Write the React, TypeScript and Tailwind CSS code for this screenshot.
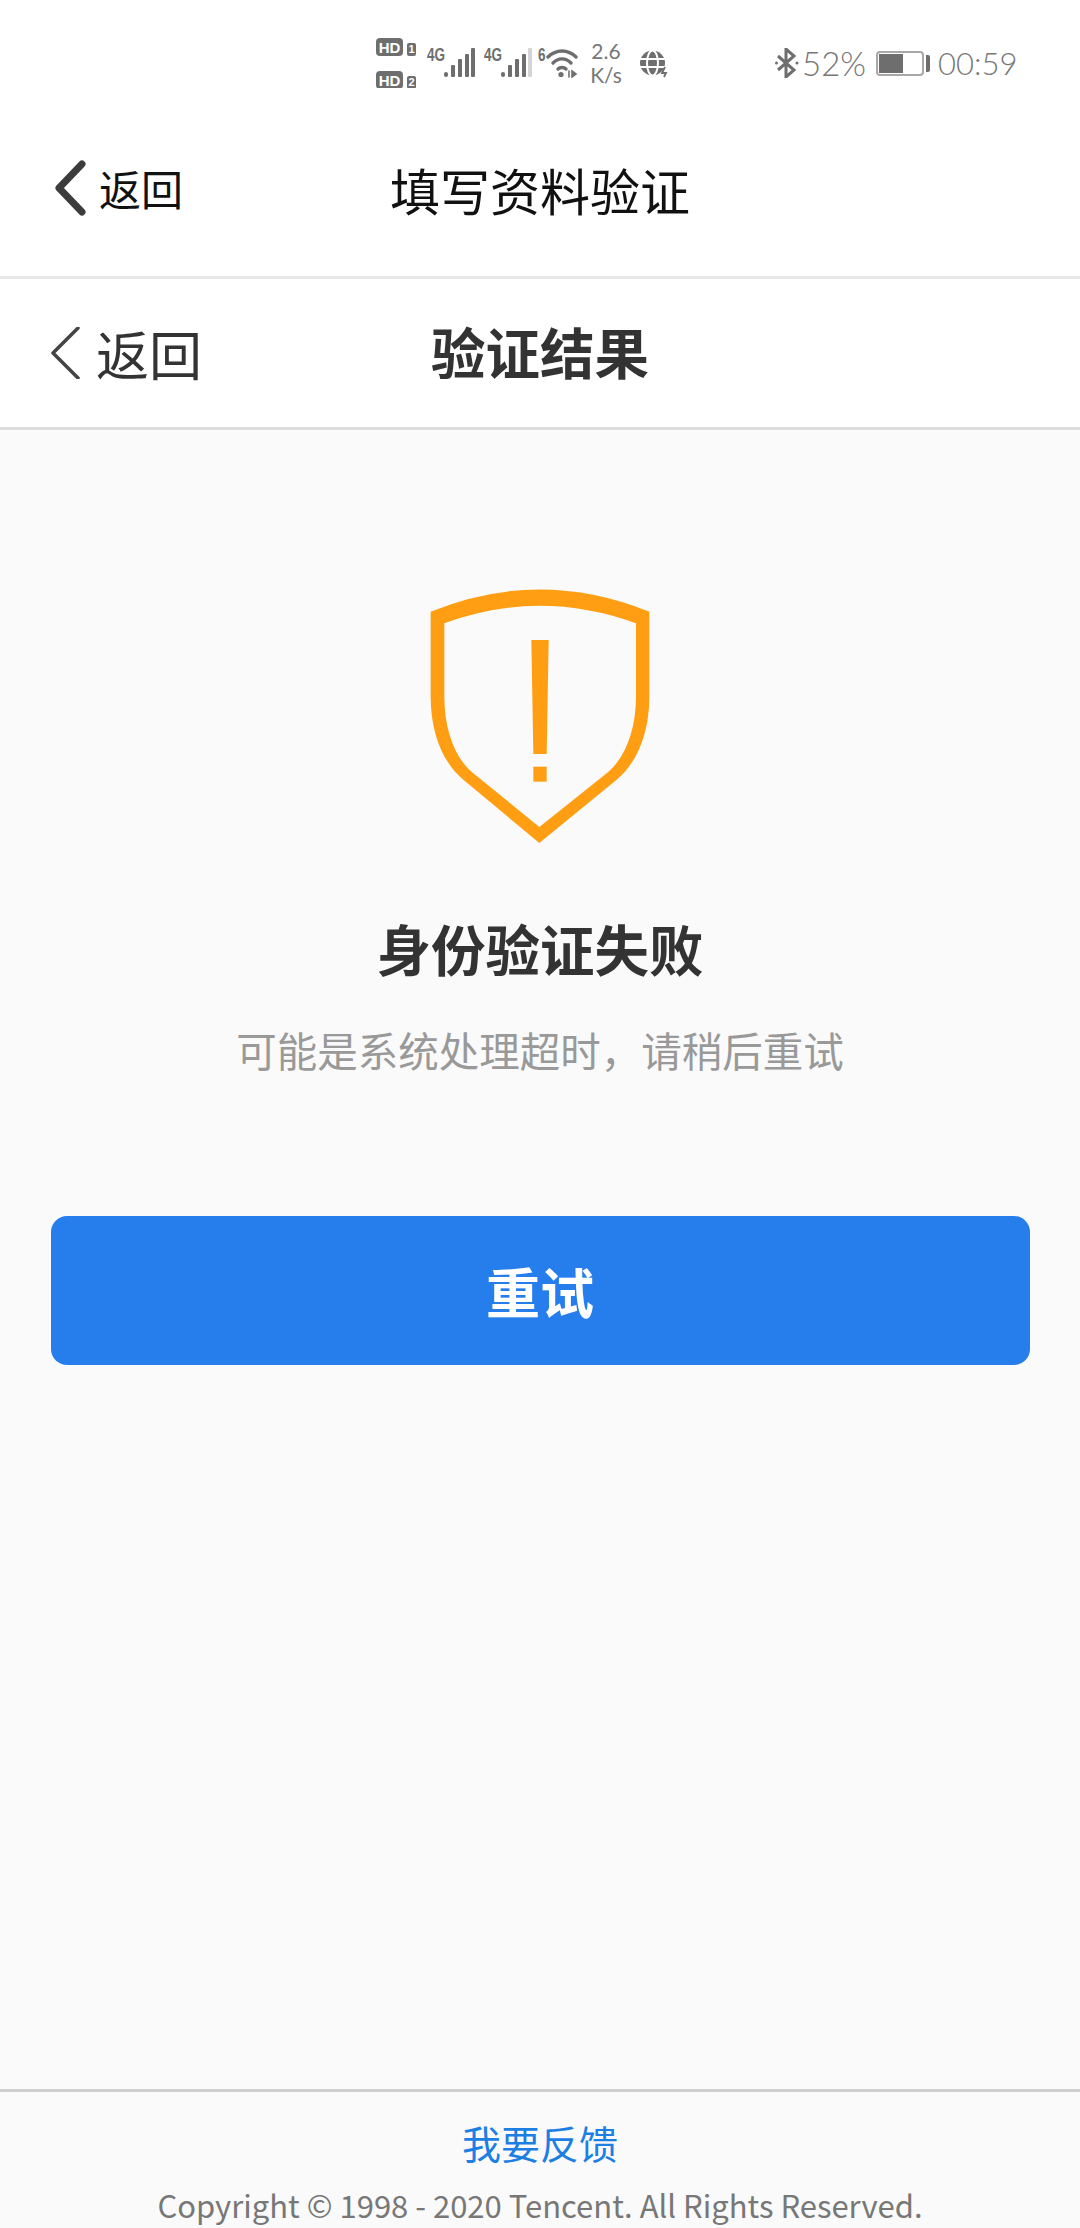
const cjk = "font-['Noto_Sans_CJK_SC','Noto_Sans',sans-serif]";

function HdRow({ n }: { n: string }) {
  return (
    <div className="flex items-end gap-[4px] h-[19px]">
      <div className="w-[27px] h-[18px] rounded-[4px] bg-[#6e6e6e] flex items-center justify-center text-white text-[15px] leading-none font-bold font-['Liberation_Sans',sans-serif]">HD</div>
      <div className="w-[9px] h-[13px] rounded-[2px] bg-[#6e6e6e] flex items-center justify-center text-white text-[11px] leading-none font-bold font-['Liberation_Sans',sans-serif]">{n}</div>
    </div>
  );
}

function Signal({ lastLight }: { lastLight?: boolean }) {
  return (
    <div className="flex items-start w-[48px] h-[30px]">
      <span className="w-[17px] text-[18px] leading-[15px] font-bold text-[#6e6e6e] font-['Liberation_Sans',sans-serif] scale-x-[0.75] origin-left">4G</span>
      <svg width="31" height="30" viewBox="0 0 31 30" className="shrink-0">
        <rect x="0" y="24" width="4" height="5" rx="2" fill="#6e6e6e" />
        <rect x="7" y="17" width="4" height="12" rx="1" fill="#6e6e6e" />
        <rect x="14" y="11" width="4" height="18" rx="1" fill="#6e6e6e" />
        <rect x="21" y="6" width="4" height="23" rx="1" fill="#6e6e6e" />
        <rect x="27" y="0" width="4" height="29" rx="1" fill={lastLight ? "#d4d4d4" : "#6e6e6e"} />
      </svg>
    </div>
  );
}

function StatusBar() {
  return (
    <div className="h-[88px] bg-white flex items-center pl-[376px] pt-[38px] text-[#777] font-['Lato','Roboto',sans-serif]">
      <div className="flex flex-col gap-[14px] w-[51px]">
        <HdRow n="1" />
        <HdRow n="2" />
      </div>
      <div className="flex gap-[9px] w-[111px]">
        <Signal />
        <Signal lastLight />
      </div>
      <div className="flex items-start w-[52px] h-[30px]">
        <span className="w-[8px] text-[18px] leading-[15px] font-bold text-[#6e6e6e] font-['Liberation_Sans',sans-serif] scale-x-[0.75] origin-left">6</span>
        <svg width="32" height="30" viewBox="0 0 32 30" fill="none" stroke="#6e6e6e" strokeWidth="3.4" strokeLinecap="round">
          <path d="M2 9 C10 1 22 1 30 9" />
          <path d="M7 15 C12 9.5 20 9.5 25 15" />
          <path d="M12 21 C14 19 18 19 20 21" />
          <circle cx="15" cy="26.5" r="2.6" fill="#6e6e6e" stroke="none" />
          <path d="M23 23 L23 29 M26 23 L30 26 L26 29 Z" strokeWidth="1.6" fill="#6e6e6e" />
        </svg>
      </div>
      <div className="flex flex-col items-center w-[32px] text-[21px] leading-[24px] text-[#777]">
        <span>2.6</span>
        <span>K/s</span>
      </div>
      <div className="ml-[16px] w-[32px] h-[30px]">
        <svg width="31" height="30" viewBox="0 0 31 30" fill="none" stroke="#6e6e6e" strokeWidth="3.2">
          <circle cx="14.5" cy="15" r="12.5" fill="#6e6e6e" stroke="none" />
          <path d="M2 11 H27 M2 19 H27" stroke="#fff" strokeWidth="2" />
          <ellipse cx="14.5" cy="15" rx="5.5" ry="12.5" stroke="#fff" strokeWidth="2" />
          <path d="M27 19 L24 25 H28 L26 29" strokeWidth="1.8" stroke="#6e6e6e" />
        </svg>
      </div>
      <div className="ml-[105px] flex items-center h-[30px]">
        <svg width="24" height="30" viewBox="0 0 24 30" fill="none" stroke="#6e6e6e" strokeWidth="3" className="shrink-0">
          <path d="M3 8 L19 22 L11 29 V1 L19 8 L3 22" />
          <circle cx="1.5" cy="15" r="1.5" fill="#6e6e6e" stroke="none" />
          <circle cx="22" cy="15" r="1.5" fill="#6e6e6e" stroke="none" />
        </svg>
        <span className="ml-[3px] w-[65px] text-[33px] leading-none font-light">52%</span>
        <div className="ml-[9px] w-[48px] h-[25px] rounded-[4px] border-2 border-[#a8a8a8] p-[1px] shrink-0">
          <div className="w-[24px] h-full bg-[#6e6e6e]" />
        </div>
        <div className="ml-[2px] w-[4px] h-[17px] rounded-r-[2px] bg-[#6e6e6e] shrink-0" />
        <span className="ml-[8px] text-[31px] leading-none font-light">00:59</span>
      </div>
    </div>
  );
}

export default function App() {
  return (
    <div className={`w-[1080px] h-[2228px] overflow-hidden flex flex-col bg-[#fafafa] ${cjk}`}>
      <StatusBar />

      <div className="h-[191px] bg-white border-b-[3px] border-[#e8e8e8] relative flex items-center pl-[54px] pt-[27px] pb-[15px]">
        <svg width="32" height="56" viewBox="0 0 32 56" fill="none" stroke="#3c3c3c" strokeWidth="7" strokeLinecap="round" strokeLinejoin="round" className="shrink-0">
          <path d="M28 4 L5 28 L28 52" />
        </svg>
        <span className="ml-[13px] text-[42px] leading-none text-[#111]">返回</span>
        <span className="absolute left-0 right-0 top-[71px] text-center text-[50px] leading-[60px] text-[#111]">填写资料验证</span>
      </div>

      <div className="h-[151px] bg-white border-b-[3px] border-[#dcdcdc] relative flex items-center pl-[50px]">
        <svg width="30" height="52" viewBox="0 0 30 52" fill="none" stroke="#444" strokeWidth="3.5" strokeLinecap="round" strokeLinejoin="round" className="shrink-0">
          <path d="M28 1 L3 26 L28 51" />
        </svg>
        <span className="ml-[16px] text-[53px] leading-none text-[#333]">返回</span>
        <span className="absolute left-0 right-0 top-[40px] text-center text-[54.5px] leading-[64px] font-bold text-[#333]">验证结果</span>
      </div>

      <main className="flex-1 flex flex-col items-center">
        <svg width="280" height="290" viewBox="0 0 840 870" className="mt-[140px] shrink-0" fill="none">
          <path d="M92 125 Q418 -8 748 125 V380 C748 490 710 580 650 629 L418 819 L190 629 C130 580 92 490 92 380 Z M133 160 V380 C133 480 165 565 219 609 L418 771 L621 609 C675 565 708 480 708 380 V160 Q418 55 133 160 Z" fill="#ff9e12" fillRule="evenodd" />
          <path d="M394 210 H446 L440 552 H400 Z" fill="#ff9e12" />
          <rect x="400" y="590" width="40" height="45" fill="#ff9e12" />
        </svg>
        <h1 className="mt-[48px] text-[54.5px] leading-[80px] font-bold text-[#333]">身份验证失败</h1>
        <p className="mt-[32px] text-[40.5px] leading-[60px] text-[#999]">可能是系统处理超时，请稍后重试</p>
        <button className="mt-[136px] w-[979px] h-[149px] rounded-[16px] bg-[#267eec] text-white text-[54px] font-bold">重试</button>
      </main>

      <footer className="h-[139px] shrink-0 border-t-[3px] border-[#cfcfcf] flex flex-col items-center">
        <a className="mt-[21px] text-[39px] leading-[58px] text-[#1b7fe3]">我要反馈</a>
        <p className="mt-[10px] text-[31px] leading-[48px] text-[#777] whitespace-nowrap">Copyright © 1998 - 2020 Tencent. All Rights Reserved.</p>
      </footer>
    </div>
  );
}
